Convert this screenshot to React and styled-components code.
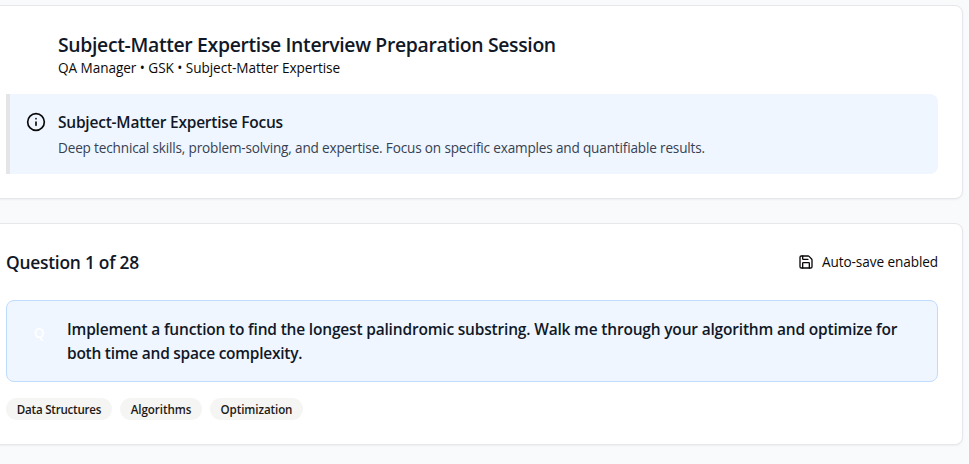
import React from 'react';
import styled, { createGlobalStyle } from 'styled-components';
import { Info, Save } from 'lucide-react';

const GlobalStyle = createGlobalStyle`
  *, *::before, *::after { box-sizing: border-box; }
  html, body { margin: 0; overflow: hidden; }
  body {
    background: #f9fafb;
    color: #0c0a09;
    font-family: "Segoe UI", "Open Sans", "Noto Sans", sans-serif;
  }
  h1, h2, h3, p { margin: 0; }
`;

const Page = styled.main`
  height: 464px;
  overflow: hidden;
  padding: 5px 6px 0 0;
  display: flex;
  flex-direction: column;
  gap: 24px;
`;

const Card = styled.section`
  flex: none;
  width: 982px;
  margin-left: -19px;
  padding: 24px;
  background: #fff;
  border: 1px solid #e5e7eb;
  border-radius: 8px;
  box-shadow: 0 1px 2px rgba(0, 0, 0, 0.05);
`;

const SessionHeader = styled.header`
  padding-left: 52px;
  margin-bottom: 16px;
`;

const Title = styled.h1`
  margin-bottom: -2px;
  font-size: 19.4px;
  font-weight: 600;
  line-height: 30px;
  letter-spacing: -0.34px;
  color: #111827;
  white-space: nowrap;
`;

const Subtitle = styled.p`
  font-size: 13.6px;
  line-height: 20px;
  letter-spacing: -0.06px;
  white-space: nowrap;
`;

const FocusBanner = styled.div`
  display: flex;
  gap: 12px;
  padding: 16px;
  background: #eff6ff;
  border-left: 4px solid #e5e5e5;
  border-radius: 0 8px 8px 0;

  svg { flex: none; margin-top: 2px; }
`;

const FocusTitle = styled.h3`
  font-size: 15.5px;
  font-weight: 600;
  line-height: 24px;
  letter-spacing: -0.22px;
  color: #111827;
`;

const FocusText = styled.p`
  margin-top: 4px;
  font-size: 13.6px;
  line-height: 20px;
  letter-spacing: -0.175px;
  color: #374151;
  white-space: nowrap;
`;

const QuestionHeader = styled.header`
  display: flex;
  align-items: center;
  justify-content: space-between;
  margin-bottom: 24px;
`;

const Counter = styled.h2`
  font-size: 17.4px;
  font-weight: 600;
  line-height: 28px;
  letter-spacing: -0.25px;
  color: #111827;
`;

const AutoSave = styled.div`
  display: flex;
  align-items: center;
  gap: 8px;
  font-size: 13.6px;
  line-height: 20px;
  letter-spacing: -0.09px;
`;

const QuestionBox = styled.div`
  display: flex;
  gap: 12px;
  padding: 16px;
  background: #eff6ff;
  border: 1px solid #bfdbfe;
  border-radius: 8px;
`;

const Badge = styled.span`
  flex: none;
  width: 32px;
  height: 32px;
  display: flex;
  align-items: center;
  justify-content: center;
  border-radius: 50%;
  font-size: 13.6px;
  font-weight: 600;
  line-height: 20px;
  color: #fff;
`;

const QuestionText = styled.p`
  font-size: 15.5px;
  font-weight: 600;
  line-height: 24px;
  color: #111827;
`;

const Line = styled.span`
  display: block;
  letter-spacing: ${({ $tracking }) => $tracking}px;
  white-space: nowrap;
`;

const Tags = styled.div`
  display: flex;
  gap: 8px;
  margin-top: 16px;
`;

const Tag = styled.span`
  width: ${({ $width }) => $width}px;
  padding: 4px 0 2px;
  text-align: center;
  border-radius: 999px;
  background: #f5f5f4;
  color: #1c1917;
  font-size: 11.6px;
  font-weight: 600;
  line-height: 16px;
  letter-spacing: ${({ $tracking }) => $tracking}px;
  white-space: nowrap;
`;

const tags = [
  { label: 'Data Structures', width: 106, tracking: -0.24 },
  { label: 'Algorithms', width: 82, tracking: -0.06 },
  { label: 'Optimization', width: 93, tracking: -0.1 },
];

export default function App() {
  return (
    <>
      <GlobalStyle />
      <Page>
        <Card>
          <SessionHeader>
            <Title>Subject-Matter Expertise Interview Preparation Session</Title>
            <Subtitle>QA Manager • GSK • Subject-Matter Expertise</Subtitle>
          </SessionHeader>
          <FocusBanner>
            <Info size={20} />
            <div>
              <FocusTitle>Subject-Matter Expertise Focus</FocusTitle>
              <FocusText>
                Deep technical skills, problem-solving, and expertise. Focus on specific examples and quantifiable results.
              </FocusText>
            </div>
          </FocusBanner>
        </Card>
        <Card>
          <QuestionHeader>
            <Counter>Question 1 of 28</Counter>
            <AutoSave>
              <Save size={16} />
              Auto-save enabled
            </AutoSave>
          </QuestionHeader>
          <QuestionBox>
            <Badge>Q</Badge>
            <QuestionText>
              <Line $tracking={-0.185}>
                Implement a function to find the longest palindromic substring. Walk me through your algorithm and optimize for
              </Line>
              <Line $tracking={-0.25}>both time and space complexity.</Line>
            </QuestionText>
          </QuestionBox>
          <Tags>
            {tags.map(({ label, width, tracking }) => (
              <Tag key={label} $width={width} $tracking={tracking}>{label}</Tag>
            ))}
          </Tags>
        </Card>
      </Page>
    </>
  );
}
